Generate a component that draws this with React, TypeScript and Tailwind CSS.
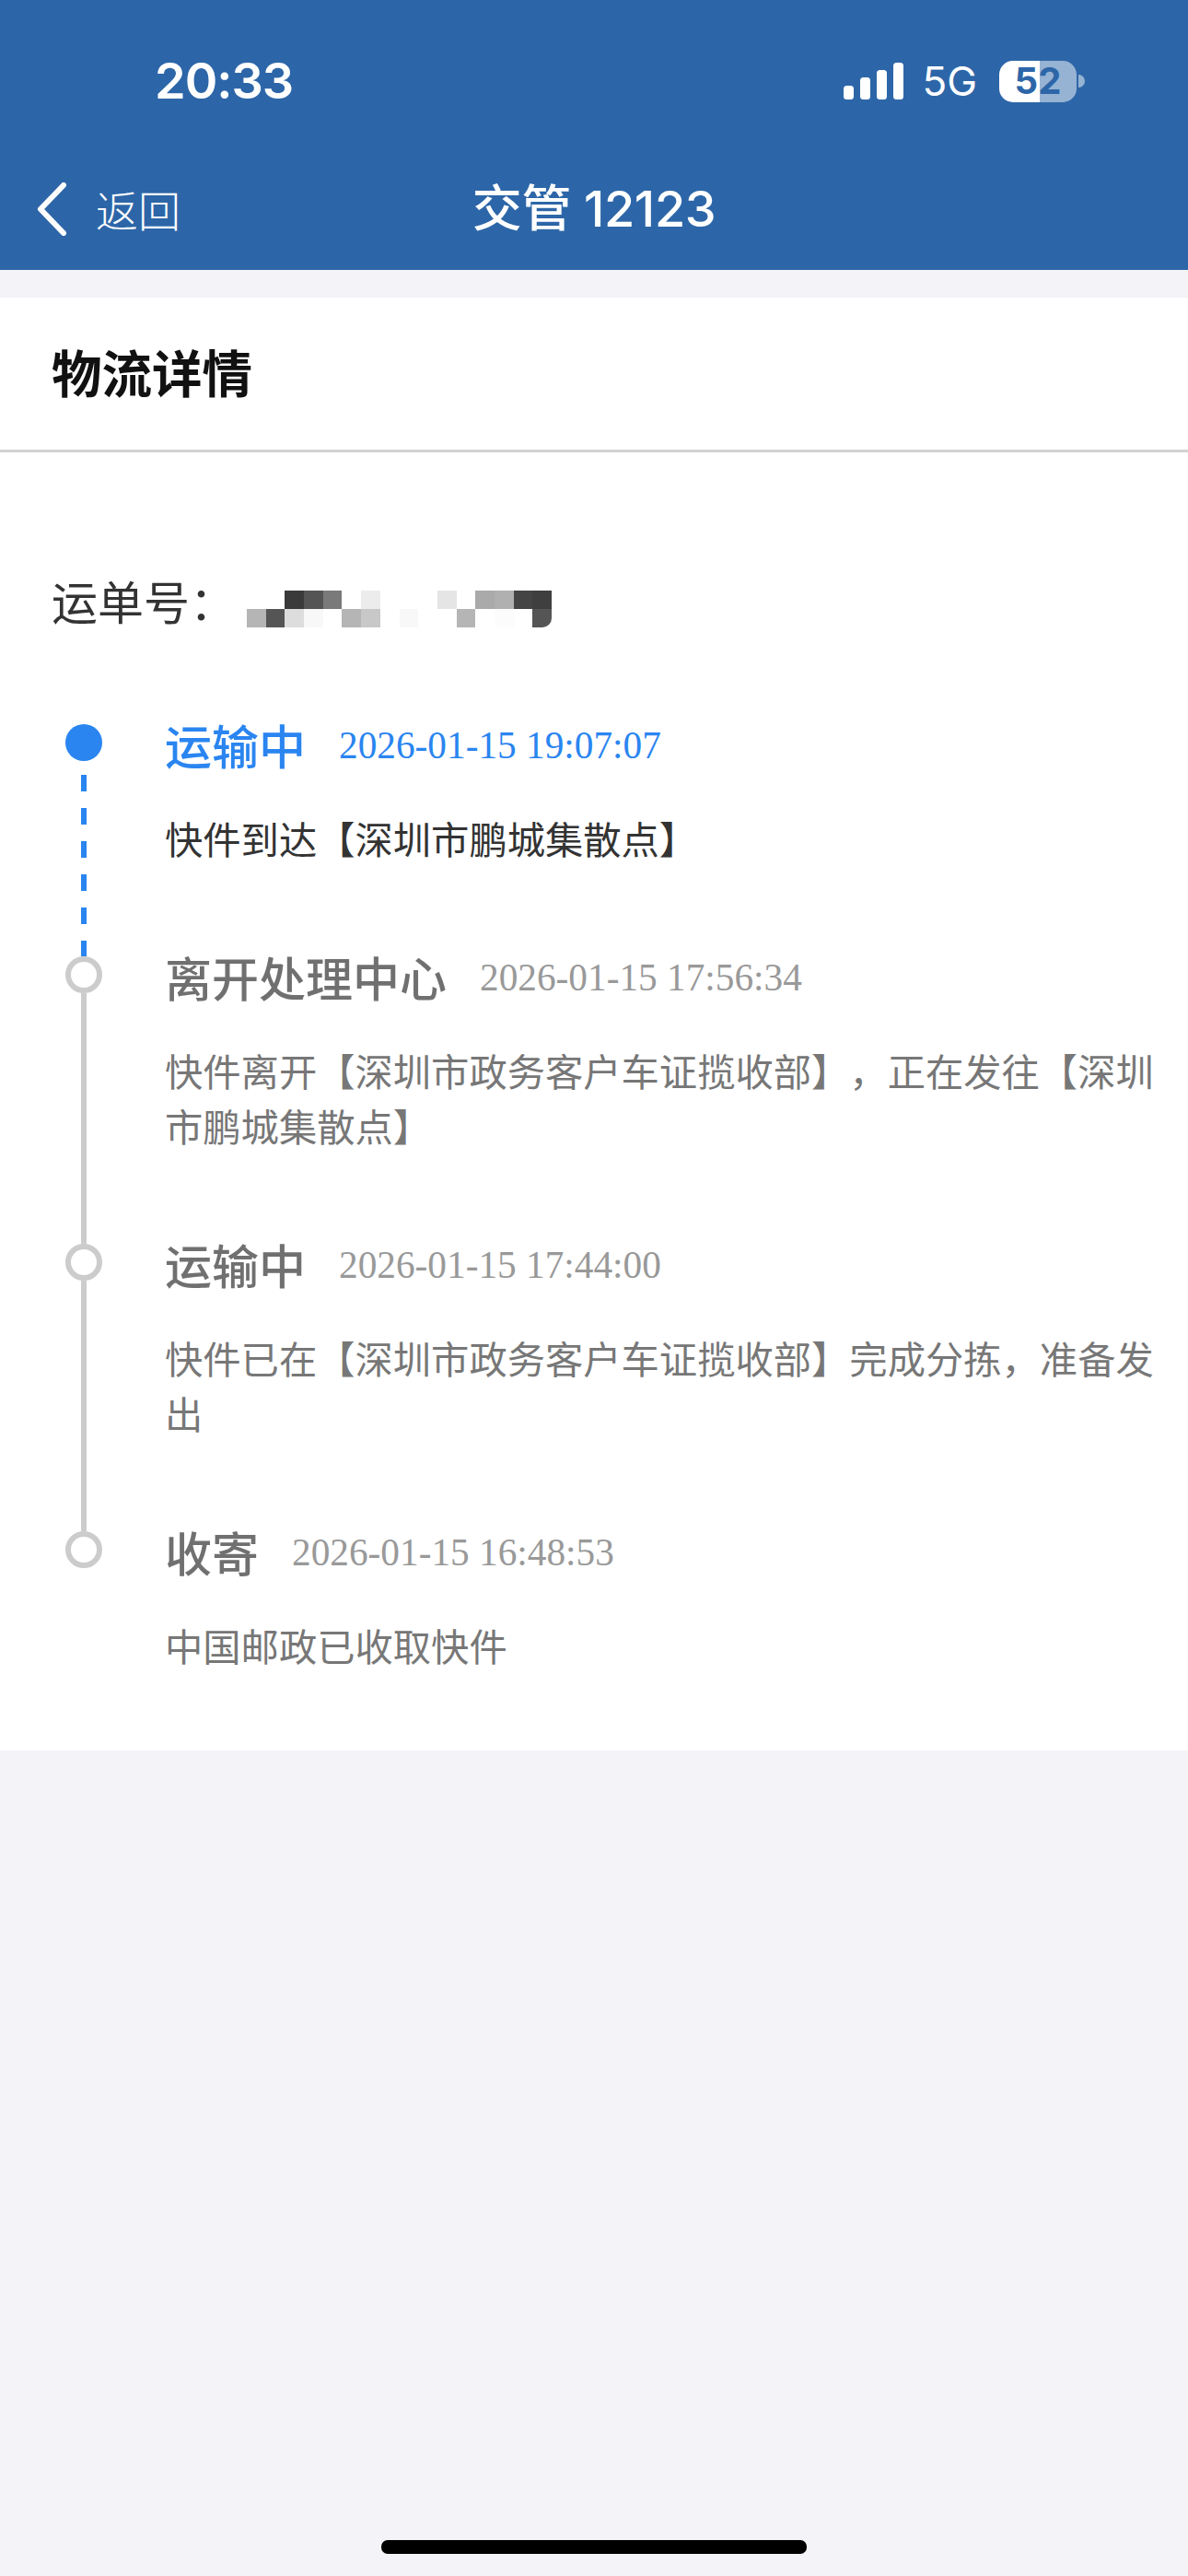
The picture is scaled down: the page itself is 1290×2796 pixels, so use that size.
const sans = "font-['Inter','Liberation_Sans','Noto_Sans_CJK_SC',sans-serif]";
const cjk = "font-['Noto_Sans_CJK_SC',sans-serif]";

const maskRows = [
  ["", "", "bg-[#3a3a3a]", "bg-[#555555]", "bg-[#7a7a7a]", "", "bg-[#ececec]", "", "", "", "bg-[#e5e5e5]", "", "bg-[#aaaaaa]", "bg-[#b0b0b0]", "bg-[#444444]", "bg-[#3f3f3f]"],
  ["bg-[#b5b5b5]", "bg-[#555555]", "bg-[#dddddd]", "bg-[#f8f8f8]", "", "bg-[#b5b5b5]", "bg-[#c8c8c8]", "", "bg-[#f8f8f8]", "", "", "bg-[#b5b5b5]", "", "bg-[#fcfcfc]", "", "bg-[#555555] rounded-br-[10px]"],
];

const steps = [
  {
    title: "运输中",
    time: "2026-01-15 19:07:07",
    lines: ["快件到达【深圳市鹏城集散点】"],
    active: true,
  },
  {
    title: "离开处理中心",
    time: "2026-01-15 17:56:34",
    lines: ["快件离开【深圳市政务客户车证揽收部】，正在发往【深圳", "市鹏城集散点】"],
  },
  {
    title: "运输中",
    time: "2026-01-15 17:44:00",
    lines: ["快件已在【深圳市政务客户车证揽收部】完成分拣，准备发", "出"],
  },
  {
    title: "收寄",
    time: "2026-01-15 16:48:53",
    lines: ["中国邮政已收取快件"],
    last: true,
  },
];

const StatusBar = () => (
  <div className="flex items-center justify-between h-[176px] pl-[168px] pr-[112px] text-white">
    <span className={`${sans} text-[54px] font-semibold leading-none tracking-[-1px]`}>20:33</span>
    <div className="flex items-center">
      <svg width="65" height="40" viewBox="0 0 65 40" fill="#fff">
        <rect x="0" y="25" width="11" height="15" rx="3.5" />
        <rect x="18" y="16" width="11" height="24" rx="3.5" />
        <rect x="36" y="8" width="11" height="32" rx="3.5" />
        <rect x="54" y="0" width="11" height="40" rx="3.5" />
      </svg>
      <span className={`${sans} text-[44px] leading-none ml-[20px]`}>5G</span>
      <div className="flex items-center ml-[24px]">
        <div className="relative flex w-[84px] h-[45px]">
          <div className="h-full w-[44px] rounded-l-[15px] bg-white" />
          <div className="h-full w-[40px] rounded-r-[15px] bg-white/50" />
          <span className={`absolute inset-0 flex items-center justify-center ${sans} text-[40px] font-bold leading-none text-[#2d66a8]`}>52</span>
        </div>
        <div className="w-[7px] h-[14px] ml-[2px] rounded-r-full bg-white/50" />
      </div>
    </div>
  </div>
);

const NavBar = () => (
  <div className="relative flex items-center justify-center h-[117px] pb-[16px] text-white">
    <div className="absolute left-[40px] top-[22px] flex items-center">
      <svg width="32" height="58" viewBox="0 0 32 58" fill="none" stroke="#fff" strokeWidth="6" strokeLinecap="round" strokeLinejoin="round">
        <path d="M29 3 L4 29 L29 55" />
      </svg>
      <span className={`${cjk} text-[46px] leading-none ml-[32px] font-light -mt-[2px]`}>返回</span>
    </div>
    <span className={`${sans} text-[54px] font-medium leading-none tracking-[-0.4px]`}>交管 12123</span>
  </div>
);

const App = () => {
  return (
    <div className="flex flex-col h-[2796px] bg-[#f3f3f8]">
      <header className="bg-[#2d66a8]">
        <StatusBar />
        <NavBar />
      </header>

      <main className="mt-[30px] bg-white h-[1577px] [text-spacing-trim:space-all]">
        <div className="h-[168px] flex items-center pl-[56px] pb-[4px] border-b-[3px] border-[#d2d2d2]">
          <h1 className={`${cjk} text-[54.5px] font-bold leading-none text-[#111111]`}>物流详情</h1>
        </div>

        <div className="flex items-center mt-[125px] pl-[56px] h-[70px]">
          <span className={`${cjk} text-[50px] leading-none text-[#333333]`}>运单号：</span>
          <div className="ml-[12px] mt-[20px]">
            {maskRows.map((row, i) => (
              <div key={i} className="flex">
                {row.map((c, j) => (
                  <div key={j} className={`w-[20.7px] h-[20px] ${c}`} />
                ))}
              </div>
            ))}
          </div>
        </div>

        <div className="mt-[100px] pl-[71px]">
          {steps.map((s, i) => (
            <div key={i} className="flex">
              <div className="flex flex-col items-center w-[40px] shrink-0">
                {s.active ? (
                  <div className="w-[40px] h-[40px] rounded-full bg-[#2a85f0]" />
                ) : (
                  <div className="w-[40px] h-[40px] rounded-full border-[6px] border-[#cccccc] bg-white" />
                )}
                {!s.last &&
                  (s.active ? (
                    <div className="flex-1 w-[6px] mt-[15px] bg-[repeating-linear-gradient(to_bottom,#2a85f0_0,#2a85f0_18px,transparent_18px,transparent_36px)]" />
                  ) : (
                    <div className="flex-1 w-[6px] bg-[#cccccc]" />
                  ))}
              </div>
              <div className={`ml-[68px] ${s.last ? "" : "pb-[99px]"}`}>
                <div className="flex items-center h-[46px]">
                  <span className={`${cjk} -mt-[2px] text-[51px] font-medium leading-none ${s.active ? "text-[#2a85f0]" : "text-[#707070]"}`}>
                    {s.title}
                  </span>
                  <span className={`font-['Liberation_Serif',serif] text-[41.3px] leading-none ml-[36px] mt-[2px] ${s.active ? "text-[#2a85f0]" : "text-[#999999]"}`}>
                    {s.time}
                  </span>
                </div>
                <div className={`${cjk} mt-[47px] text-[41.3px] leading-[60px] whitespace-nowrap ${s.active ? "text-[#333333]" : "text-[#777777]"}`}>
                  {s.lines.map((l) => (
                    <div key={l}>{l}</div>
                  ))}
                </div>
              </div>
            </div>
          ))}
        </div>
      </main>

      <div className="flex-1 flex items-end justify-center pb-[24px]">
        <div className="w-[462px] h-[15px] rounded-[7px] bg-black" />
      </div>
    </div>
  );
};

export default App;
